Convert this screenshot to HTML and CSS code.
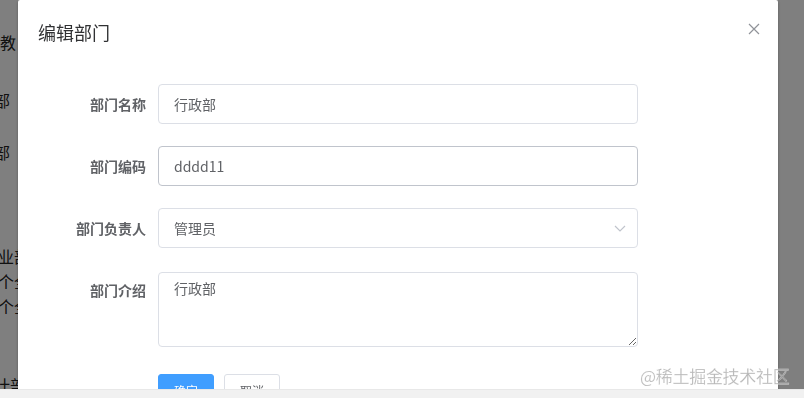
FILE: index.html
```html
<!DOCTYPE html>
<html lang="zh-CN">
  <head>
    <meta charset="UTF-8" />
    <title>编辑部门</title>
    <link rel="stylesheet" href="styles.css">
  </head>
  <body>
    <!-- page behind the dialog -->
    <div class="bg-page">
      <div class="bg-line l1">管理教</div>
      <div class="bg-line l2">部</div>
      <div class="bg-line l3">部</div>
      <div class="bg-line l4">业部</div>
      <div class="bg-line l5">个全</div>
      <div class="bg-line l6">个全</div>
      <div class="bg-line l7">计部</div>
    </div>

    <div class="mask">
      <div class="dialog">
        <div class="dialog-header">
          <span class="dialog-title">编辑部门</span>
          <button class="dialog-close" aria-label="关闭">
            <svg width="12" height="12" viewBox="0 0 12 12">
              <path d="M1 1 L11 11 M11 1 L1 11" stroke="#909399" stroke-width="1.2" fill="none" />
            </svg>
          </button>
        </div>

        <div class="dialog-body">
          <form class="form">
            <div class="form-item">
              <label class="form-label">部门名称</label>
              <div class="form-content">
                <input class="input" type="text" value="行政部" />
              </div>
            </div>
            <div class="form-item">
              <label class="form-label">部门编码</label>
              <div class="form-content">
                <input class="input input-hover" type="text" value="dddd11" />
              </div>
            </div>
            <div class="form-item">
              <label class="form-label">部门负责人</label>
              <div class="form-content">
                <div class="select">
                  <input class="input" type="text" value="管理员" readonly />
                  <svg class="select-arrow" width="14" height="14" viewBox="0 0 14 14">
                    <path d="M2 5 L7 10 L12 5" stroke="#c0c4cc" stroke-width="1.2" fill="none" />
                  </svg>
                </div>
              </div>
            </div>
            <div class="form-item">
              <label class="form-label">部门介绍</label>
              <div class="form-content">
                <textarea class="textarea">行政部</textarea>
              </div>
            </div>
            <div class="form-item form-actions">
              <div class="form-label"></div>
              <div class="form-content">
                <button type="button" class="btn btn-primary">确定</button>
                <button type="button" class="btn">取消</button>
              </div>
            </div>
          </form>
        </div>
      </div>
    </div>

    <div class="bottom-bar"></div>
    <div class="watermark">@稀土掘金技术社区</div>
  </body>
</html>
```

FILE: styles.css
```css
body {
  margin: 0;
  font-family: "Noto Sans CJK SC", "Noto Sans", sans-serif;
  background: #fff;
  color: #303133;
  overflow: hidden;
  height: 398px;
}

/* Background page */
.bg-page {
  padding-top: 30px;
  font-size: 16px;
  color: #222;
}

.bg-line {
  line-height: 24px;
  white-space: nowrap;
}

.l1 { margin-left: -32px; }
.l2 { margin-left: -6px; margin-top: 34px; }
.l3 { margin-left: -6px; margin-top: 28px; }
.l4 { margin-left: -2px; margin-top: 80px; }
.l5 { margin-left: -2px; margin-top: 1px; }
.l6 { margin-left: -2px; margin-top: 1px; }
.l7 { margin-left: -6px; margin-top: 55px; }

/* Mask + dialog */
.mask {
  position: fixed;
  inset: 0;
  background: rgba(0, 0, 0, 0.5);
}

.dialog {
  width: 760px;
  margin-left: 18px;
  background: #fff;
  border-radius: 2px;
  box-shadow: 0 1px 3px rgba(0, 0, 0, 0.3);
  height: 420px;
}

.dialog-header {
  padding: 20px 20px 10px;
  display: flex;
  justify-content: space-between;
  align-items: center;
}

.dialog-title {
  font-size: 18px;
  line-height: 24px;
  color: #303133;
}

.dialog-close {
  border: none;
  background: none;
  padding: 0;
  margin-right: -2px;
  margin-top: -6px;
  display: flex;
}

.dialog-body {
  padding: 30px 20px;
}

/* Form */
.form-item {
  display: flex;
  margin-bottom: 22px;
}

.form-label {
  width: 120px;
  flex-shrink: 0;
  padding-right: 12px;
  box-sizing: border-box;
  text-align: right;
  font-size: 14px;
  font-weight: 700;
  line-height: 40px;
  color: #606266;
}

.form-content {
  width: 480px;
  display: flex;
  gap: 10px;
}

.input {
  width: 100%;
  height: 40px;
  box-sizing: border-box;
  border: 1px solid #dcdfe6;
  border-radius: 4px;
  padding: 0 15px;
  font-family: inherit;
  font-size: 14px;
  color: #606266;
  outline: none;
}

.input-hover {
  border-color: #c0c4cc;
}

.select {
  position: relative;
  width: 100%;
}

.select-arrow {
  position: absolute;
  right: 11px;
  top: 13px;
}

.textarea {
  width: 100%;
  height: 75px;
  box-sizing: border-box;
  border: 1px solid #dcdfe6;
  border-radius: 4px;
  padding: 5px 15px;
  font-family: inherit;
  font-size: 14px;
  line-height: 1.5;
  color: #606266;
  resize: vertical;
  outline: none;
  margin-top: 2px;
}

.form-actions {
  padding-top: 5px;
}

.btn {
  height: 32px;
  padding: 0 15px;
  font-family: inherit;
  font-size: 12px;
  border: 1px solid #dcdfe6;
  border-radius: 3px;
  background: #fff;
  color: #606266;
}

.btn-primary {
  background: #409eff;
  border-color: #409eff;
  color: #fff;
}

/* Overlays on top */
.bottom-bar {
  position: fixed;
  left: 0;
  right: 0;
  bottom: 0;
  height: 8px;
  background: #f1f1f1;
  border-top: 1px solid #e8e8e8;
}

.watermark {
  position: fixed;
  left: 640px;
  top: 363px;
  font-size: 17px;
  letter-spacing: -0.3px;
  color: rgba(160, 160, 160, 0.75);
  -webkit-text-stroke: 0.3px rgba(255, 255, 255, 0.6);
}
```
